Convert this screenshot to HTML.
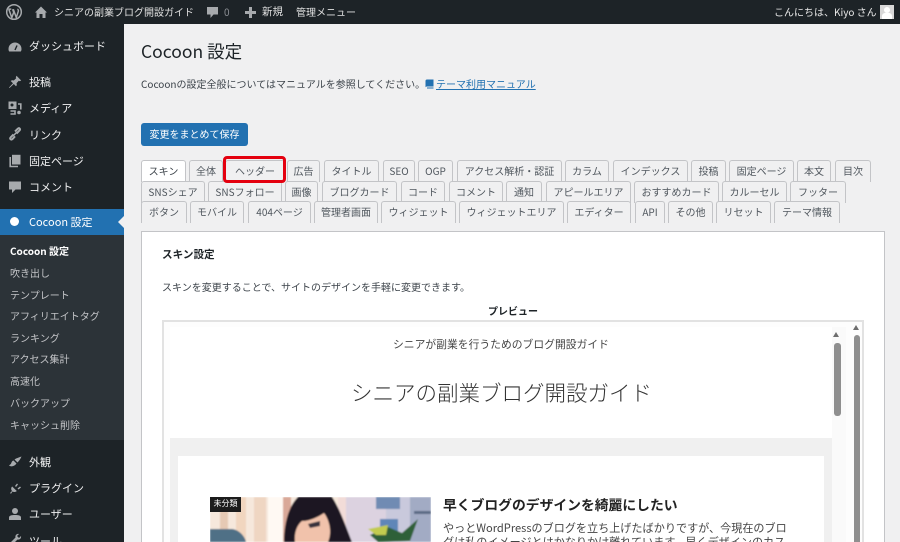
<!DOCTYPE html>
<html lang="ja"><head><meta charset="utf-8"><title>Cocoon 設定</title>
<style>
*{box-sizing:border-box}
html,body{margin:0;padding:0;width:900px;height:542px;overflow:hidden}
#w{position:absolute;left:0;top:0;width:900px;height:542px;overflow:hidden;background:#f0f0f1;font-family:"Noto Sans CJK JP","Liberation Sans",sans-serif;color:#3c434a;font-size:10px}
.a{position:absolute;white-space:nowrap}
#bar{left:0;top:0;width:900px;height:24px;background:#1d2327}
#side{left:0;top:24px;width:124px;height:518px;background:#1d2327}
#sub{left:0;top:235px;width:124px;height:205px;background:#2c3338}
.m{left:29px;color:#f0f0f1;font-size:11px;line-height:16px}
.s{left:10px;color:#c3c4c7;font-size:10px;line-height:14px}
.ic{position:absolute;left:8px;width:14px;height:14px}
.t{position:absolute;height:22px;border:1px solid #c3c4c7;border-bottom:0;border-radius:3px 3px 0 0;background:#f0f0f1;text-align:center;font-size:10px;line-height:20px;color:#50575e;white-space:nowrap}
</style></head><body><div id="w">
<div class="a" id="bar"></div>
<svg class="a" style="left:5px;top:3px" width="18" height="18" viewBox="0 0 18 18"><circle cx="9" cy="9" r="7.300" fill="none" stroke="#a7aaad" stroke-width="1.500"/><path d="M3.800 6.300l3 8.300 1.900-5.300-1.100-3M6.300 6.100H3.300M8.300 6.300l3 8.300 2-6.300c.3-1-.2-1.900-1-2" fill="none" stroke="#a7aaad" stroke-width="1.500"/></svg>
<svg class="a" style="left:34px;top:5px" width="14" height="14" viewBox="0 0 14 14"><path d="M7 1.500 1 7.500H2.500V13H5.500V9H8.500V13H11.500V7.500H13Z" fill="#a7aaad"/></svg>
<div class="a" style="left:54px;top:4px;line-height:16px;color:#e0e0e0">シニアの副業ブログ開設ガイド</div>
<svg class="a" style="left:206px;top:5px" width="13" height="14" viewBox="0 0 13 14"><path d="M1 2H12V9.500H7.500L4.500 13V9.500H1Z" fill="#a7aaad"/></svg>
<div class="a" style="left:224px;top:4px;line-height:16px;color:#8c8f94">0</div>
<svg class="a" style="left:245px;top:7px" width="11" height="11" viewBox="0 0 11 11"><path d="M4 0H7V4H11V7H7V11H4V7H0V4H4Z" fill="#a7aaad"/></svg>
<div class="a" style="left:262px;top:4px;line-height:16px;color:#e0e0e0;font-size:10.500px">新規</div>
<div class="a" style="left:296px;top:4px;line-height:16px;color:#e0e0e0">管理メニュー</div>
<div class="a" style="left:774px;top:4px;line-height:16px;color:#e8e8e8">こんにちは、Kiyo さん</div>
<div class="a" style="left:880px;top:5px;width:14px;height:14px;background:#d8d8d8"><div style="position:absolute;left:4px;top:2px;width:6px;height:6px;border-radius:3px;background:#fff"></div><div style="position:absolute;left:2px;top:8px;width:10px;height:6px;background:#fff;border-radius:3px 3px 0 0"></div></div>

<div class="a" id="side"></div>
<div class="a" id="sub"></div>
<div class="a" style="left:0;top:209px;width:124px;height:26px;background:#2271b1"></div>
<div class="a" style="left:118px;top:216px;width:0;height:0;border:6px solid transparent;border-left:0;border-right-color:#f0f0f1"></div>
<div class="a" style="left:10px;top:217px;width:9px;height:9px;border-radius:5px;background:#fff"></div>

<svg class="ic" style="top:40px" viewBox="0 0 14 14"><path d="M7 2.500A6.500 6.500 0 0 0 .5 9C.5 10 .8 11 1.200 11.500H12.800C13.200 11 13.500 10 13.500 9A6.500 6.500 0 0 0 7 2.500Z" fill="#a7aaad"/><path d="M7 10 9 5.500" stroke="#1d2327" stroke-width="1.400"/></svg>
<svg class="ic" style="top:75px" viewBox="0 0 14 14"><path d="M8.500 .8 13.200 5.500 11.800 6.200 10.800 5.800 8.500 8.200C9 9.500 8.800 10.500 8 11.300L5.800 9 1.500 13 1 12.500 5 8.200 2.700 6C3.500 5.200 4.500 5 5.800 5.500L8.200 3.200 7.800 2.200Z" fill="#a7aaad"/></svg>
<svg class="ic" style="top:101px" viewBox="0 0 14 14"><path d="M.5 .5H8.500V8H.5Z" fill="#a7aaad"/><circle cx="4" cy="4" r="1.500" fill="#1d2327"/><path d="M10 3H12.800V8.500M2.500 10H7V13H2.500" fill="none" stroke="#a7aaad" stroke-width="1.600"/><circle cx="11" cy="11.500" r="1.800" fill="#a7aaad"/></svg>
<svg class="ic" style="top:127px" viewBox="0 0 14 14"><path d="M5.500 7.500 2.800 10.200C1.300 11.700 3 13.300 4.500 12L7 9.300M8.500 6.500 11.500 3.500C12.800 2 11.200.5 9.800 1.700L7 4.500" fill="none" stroke="#a7aaad" stroke-width="2"/><path d="M5 9 9 5" stroke="#a7aaad" stroke-width="1.500"/></svg>
<svg class="ic" style="top:154px" viewBox="0 0 14 14"><path d="M4 .8H12.500V10.500H4Z" fill="#a7aaad"/><path d="M2.200 3V12.500H10" fill="none" stroke="#a7aaad" stroke-width="1.600"/></svg>
<svg class="ic" style="top:180px" viewBox="0 0 14 14"><path d="M1 1.500H13V9.500H7.500L4 13V9.500H1Z" fill="#a7aaad"/></svg>
<svg class="ic" style="top:455px" viewBox="0 0 14 14"><path d="M13.500 1.500C11 2.500 8.500 3 6.500 4.500L9.500 7.500C11 6 12.500 4 13.500 1.500ZM5.500 5.500C3.500 6 3.500 8 2.800 9L1 10.500C3 12 6.500 11.500 8.500 8.500Z" fill="#a7aaad"/></svg>
<svg class="ic" style="top:481px" viewBox="0 0 14 14"><path d="M2 12 4 10C2.800 8.500 3 6.500 4.200 5.500L8.800 10C7.500 11.200 5.800 11.300 4.500 10.500L3 12.800ZM7 5 9 2.500 10 3.500 8 6ZM9.500 7.500 12 5.500 13 6.500 10.500 8.500Z" fill="#a7aaad"/></svg>
<svg class="ic" style="top:507px" viewBox="0 0 14 14"><circle cx="7" cy="4" r="3" fill="#a7aaad"/><path d="M1 13V10.500C1 8.500 3.500 8 7 8S13 8.500 13 10.500V13Z" fill="#a7aaad"/></svg>
<svg class="ic" style="top:533px" viewBox="0 0 14 14"><path d="M11 1C8.500.5 7 2.500 7.500 4.500L1.500 10.500 3.500 12.500 9.500 6.500C11.500 7 13.500 5.500 13 3L11 5 9 3Z" fill="#a7aaad"/></svg>

<div class="a m" style="top:38px">ダッシュボード</div>
<div class="a m" style="top:74px">投稿</div>
<div class="a m" style="top:100px">メディア</div>
<div class="a m" style="top:127px">リンク</div>
<div class="a m" style="top:153px">固定ページ</div>
<div class="a m" style="top:179px">コメント</div>
<div class="a m" style="top:214px;color:#fff">Cocoon 設定</div>
<div class="a s" style="top:244px;color:#fff;font-weight:700">Cocoon 設定</div>
<div class="a s" style="top:266px">吹き出し</div>
<div class="a s" style="top:288px">テンプレート</div>
<div class="a s" style="top:309px">アフィリエイトタグ</div>
<div class="a s" style="top:331px">ランキング</div>
<div class="a s" style="top:352px">アクセス集計</div>
<div class="a s" style="top:374px">高速化</div>
<div class="a s" style="top:396px">バックアップ</div>
<div class="a s" style="top:418px">キャッシュ削除</div>
<div class="a m" style="top:454px">外観</div>
<div class="a m" style="top:480px">プラグイン</div>
<div class="a m" style="top:506px">ユーザー</div>
<div class="a m" style="top:533px">ツール</div>

<div class="a" style="left:141px;top:39px;font-size:17.500px;line-height:26px;color:#1d2327">Cocoon 設定</div>
<div class="a" style="left:141px;top:76px;line-height:16px">Cocoonの設定全般についてはマニュアルを参照してください。</div>
<svg class="a" style="left:425px;top:79px" width="9" height="10" viewBox="0 0 9 10"><path d="M2 .5H8.500V7.500H2C1 7.500.5 8 .5 8.500V2C.5 1 1 .5 2 .5ZM2 8.500H8.500V9.500H2Z" fill="#2271b1"/></svg>
<div class="a" style="left:436px;top:76px;line-height:16px;color:#2271b1;text-decoration:underline">テーマ利用マニュアル</div>
<div class="a" style="left:141px;top:123px;width:107px;height:23px;background:#2271b1;border-radius:3px;color:#fff;line-height:22px;text-align:center">変更をまとめて保存</div>

<!-- row1 -->
<div class="t" style="left:141px;top:160px;width:45px;background:#fff;color:#3c434a">スキン</div>
<div class="t" style="left:189px;top:160px;width:34px">全体</div>
<div class="t" style="left:225px;top:160px;width:60px">ヘッダー</div>
<div class="t" style="left:287px;top:160px;width:33px">広告</div>
<div class="t" style="left:324px;top:160px;width:55px">タイトル</div>
<div class="t" style="left:383px;top:160px;width:32px">SEO</div>
<div class="t" style="left:418px;top:160px;width:35px">OGP</div>
<div class="t" style="left:457px;top:160px;width:105px">アクセス解析・認証</div>
<div class="t" style="left:565px;top:160px;width:44px">カラム</div>
<div class="t" style="left:613px;top:160px;width:75px">インデックス</div>
<div class="t" style="left:691px;top:160px;width:35px">投稿</div>
<div class="t" style="left:729px;top:160px;width:65px">固定ページ</div>
<div class="t" style="left:797px;top:160px;width:34px">本文</div>
<div class="t" style="left:835px;top:160px;width:36px">目次</div>
<!-- row2 -->
<div class="t" style="left:141px;top:181px;width:64px">SNSシェア</div>
<div class="t" style="left:208px;top:181px;width:74px">SNSフォロー</div>
<div class="t" style="left:285px;top:181px;width:33px">画像</div>
<div class="t" style="left:322px;top:181px;width:75px">ブログカード</div>
<div class="t" style="left:401px;top:181px;width:44px">コード</div>
<div class="t" style="left:449px;top:181px;width:54px">コメント</div>
<div class="t" style="left:506px;top:181px;width:36px">通知</div>
<div class="t" style="left:546px;top:181px;width:85px">アピールエリア</div>
<div class="t" style="left:634px;top:181px;width:85px">おすすめカード</div>
<div class="t" style="left:722px;top:181px;width:65px">カルーセル</div>
<div class="t" style="left:790px;top:181px;width:56px">フッター</div>
<!-- row3 -->
<div class="t" style="left:141px;top:201px;width:46px">ボタン</div>
<div class="t" style="left:190px;top:201px;width:54px">モバイル</div>
<div class="t" style="left:248px;top:201px;width:63px">404ページ</div>
<div class="t" style="left:314px;top:201px;width:64px">管理者画面</div>
<div class="t" style="left:381px;top:201px;width:75px">ウィジェット</div>
<div class="t" style="left:459px;top:201px;width:105px">ウィジェットエリア</div>
<div class="t" style="left:567px;top:201px;width:64px">エディター</div>
<div class="t" style="left:635px;top:201px;width:30px">API</div>
<div class="t" style="left:668px;top:201px;width:45px">その他</div>
<div class="t" style="left:716px;top:201px;width:55px">リセット</div>
<div class="t" style="left:774px;top:201px;width:66px">テーマ情報</div>
<!-- red -->
<div class="a" style="left:223px;top:156px;width:63px;height:27px;border:3.500px solid #e4000f;border-radius:4px"></div>

<!-- panel -->
<div class="a" style="left:141px;top:231px;width:744px;height:320px;background:#fff;border:1px solid #c3c4c7"></div>
<div class="a" style="left:162px;top:247px;font-size:10.600px;line-height:16px;font-weight:700;color:#1d2327">スキン設定</div>
<div class="a" style="left:162px;top:279px;line-height:16px">スキンを変更することで、サイトのデザインを手軽に変更できます。</div>
<div class="a" style="left:488px;top:303px;line-height:16px;font-weight:700;color:#1d2327">プレビュー</div>
<div class="a" style="left:162px;top:320px;width:702px;height:240px;border:2px solid #e2e2e2;background:#fdfdfd"></div>
<div class="a" style="left:170px;top:327px;width:662px;height:215px;background:#fff"></div>
<div class="a" style="left:393px;top:335px;font-size:10.800px;line-height:18px;color:#444">シニアが副業を行うためのブログ開設ガイド</div>
<div class="a" style="left:351px;top:377px;font-size:21.500px;line-height:32px;color:#333;font-weight:300">シニアの副業ブログ開設ガイド</div>
<div class="a" style="left:170px;top:438px;width:662px;height:104px;background:#f0f0f0"></div>
<div class="a" style="left:178px;top:456px;width:646px;height:86px;background:#fff"></div>

<!-- picture -->
<svg class="a" style="left:210px;top:497px" width="221" height="45" viewBox="0 0 221 45">
<defs><filter id="b" x="-5%" y="-5%" width="110%" height="110%"><feGaussianBlur stdDeviation=".8"/></filter></defs>
<g filter="url(#b)">
<rect width="221" height="45" fill="#f6e8dc"/>
<rect x="10" width="8" height="45" fill="#e6c9b4"/>
<rect x="26" width="10" height="45" fill="#f1d6bf"/>
<rect x="44" width="12" height="45" fill="#efd6c2"/>
<rect x="58" width="16" height="45" fill="#fff9f3"/>
<rect x="73" width="8" height="45" fill="#d9a898"/>
<rect x="128" width="12" height="45" fill="#f2dcd8"/>
<rect x="136" width="85" height="45" fill="#dcd2e0"/>
<rect x="176" y="0" width="45" height="45" fill="#c9c9dc"/>
<rect x="166" y="0" width="24" height="12" fill="#6f8bb3"/>
<rect x="170" y="22" width="18" height="18" fill="#5f86b8"/>
<rect x="200" y="0" width="21" height="45" fill="#a2abc4"/>
<rect x="204" y="14" width="17" height="3" fill="#5c6a85"/>
<path d="M160 38 178 30 192 36 208 22 200 44 168 45Z" fill="#2f6138"/>
<path d="M158 32 178 28 176 38 166 38Z" fill="#c2cb50"/>
<path d="M0 32H22C30 33 35 40 36 45H0Z" fill="#4f7086"/>
<path d="M74 45C74 28 78 10 88 0H122C130 12 136 30 142 45Z" fill="#1b1722"/>
<path d="M85 45C84 36 87 28 92 24 100 24 108 20 114 16 120 24 122 36 118 45Z" fill="#f1c2ab"/>
<path d="M98 27 110 24 110 29 100 31Z" fill="#39303c"/>
</g>
</svg>
<div class="a" style="left:210px;top:497px;width:31px;height:15px;background:#1c1c1c;color:#fff;font-size:8px;line-height:14px;text-align:center">未分類</div>
<div class="a" style="left:443px;top:494px;font-size:13.800px;line-height:20px;font-weight:700;color:#222">早くブログのデザインを綺麗にしたい</div>
<div class="a" style="left:443px;top:519px;font-size:11.100px;line-height:18px;color:#444">やっとWordPressのブログを立ち上げたばかりですが、今現在のブロ</div>
<div class="a" style="left:443px;top:533px;font-size:11.100px;line-height:18px;color:#444">グは私のイメージとはかなりかけ離れています。早くデザインのカス</div>

<!-- scrollbars -->
<div class="a" style="left:832px;top:327px;width:14px;height:215px;background:#fafafa"></div>
<div class="a" style="left:833px;top:332px;width:0;height:0;border:3.500px solid transparent;border-top:0;border-bottom:5px solid #6e6e6e"></div>
<div class="a" style="left:834px;top:343px;width:7px;height:73px;background:#8f8f8f;border-radius:3px"></div>
<div class="a" style="left:853px;top:325px;width:0;height:0;border:3.500px solid transparent;border-top:0;border-bottom:5px solid #6e6e6e"></div>
<div class="a" style="left:854px;top:335px;width:6px;height:207px;background:#8f8f8f;border-radius:3px 3px 0 0"></div>
</div></body></html>
